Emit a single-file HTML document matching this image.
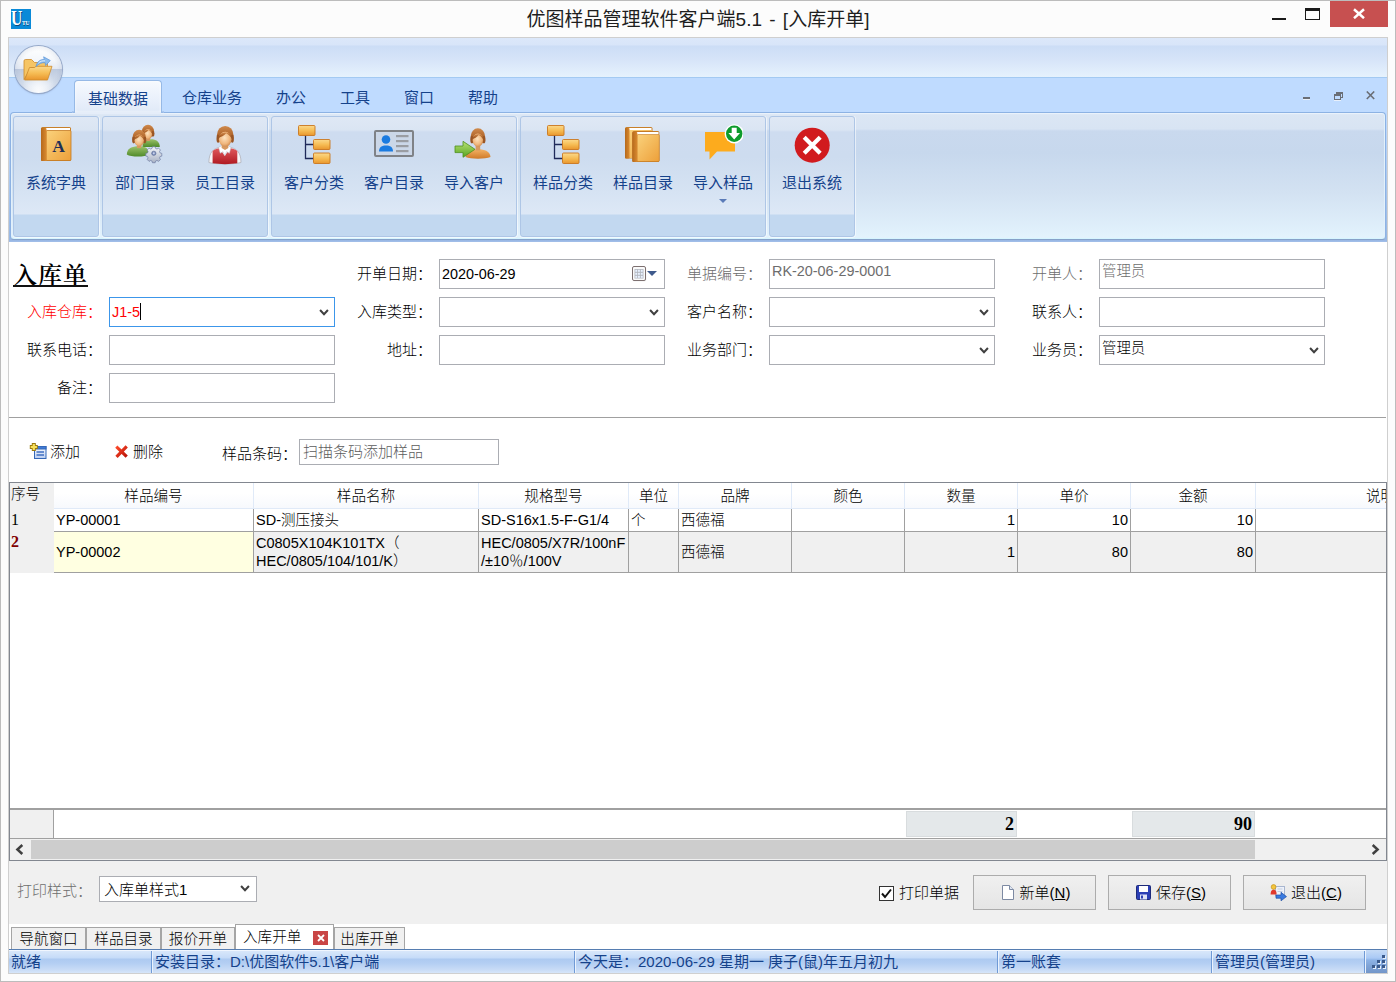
<!DOCTYPE html>
<html lang="zh-CN">
<head>
<meta charset="utf-8">
<title>优图样品管理软件客户端5.1 - [入库开单]</title>
<style>
*{box-sizing:border-box;margin:0;padding:0}
html,body{width:1396px;height:982px;overflow:hidden}
body{position:relative;background:#fcfcfc;font-family:"Liberation Sans","Noto Sans CJK SC",sans-serif;font-size:15px;color:#000}
.abs{position:absolute}
#win{position:absolute;left:0;top:0;width:1396px;height:982px;border:1px solid #bcbcbc;background:#fcfcfc}
#title{position:absolute;left:0;top:6px;width:1396px;text-align:center;font-size:19px;line-height:28px;color:#1e1e1e;word-spacing:2px}
#inner{position:absolute;left:8px;top:37px;width:1380px;height:937px;border:1px solid #cfcfcf;background:#fff}
/* ribbon */
#qat{position:absolute;left:9px;top:38px;width:1378px;height:40px;background:linear-gradient(#dce8fa 0,#d8e5f9 7px,#ccddf6 8px,#d5e3f8 20px,#e6f2fd 39px,#a4caf2 39px,#a4caf2 40px)}
#tabrow{position:absolute;left:9px;top:78px;width:1378px;height:42px;background:#bfdbff}
.rtab{position:absolute;top:80px;height:33px;font-size:15px;line-height:35px;color:#15428b;text-align:center}
.rtab.act{z-index:2;height:33px;background:linear-gradient(#f6f9fe,#e9f0fb 60%,#e2ebf8 90%,#e6eefa);border:1px solid #96b9e6;border-bottom:none;border-radius:4px 4px 0 0;box-shadow:0 0 3px rgba(255,255,255,.9) inset}
#ribbon{position:absolute;left:10px;top:112px;width:1376px;height:128px;border:1px solid #8db2e3;border-radius:4px;background:linear-gradient(#e6eefa 0,#dbe6f4 2px,#d8e4f3 16px,#c9d9ee 18px,#c7d8ed 40px,#d3e2f2 80px,#e3f3fd 126px);border-bottom-color:#86a1c9;box-shadow:inset 0 -1px 0 #d6f5ff,inset 1px 0 0 #e2f0fb,inset -1px 0 0 #e2f0fb,inset 0 1px 0 #eaf2fb}
#ribbonshadow{position:absolute;left:9px;top:240px;width:1378px;height:2px;background:linear-gradient(#96b5e2,#a3c0ea)}
.grp{position:absolute;top:116px;height:121px;border:1px solid #aec6e6;border-radius:3px;background:linear-gradient(#dfe8f5 0,#dae5f3 13px,#cedcf0 15px,#cddcef 40px,#d6e3f3 75px,#dde8f6 97px,#c2d8f0 98px,#c2d8f0 121px);box-shadow:1px 0 0 rgba(255,255,255,.55),0 1px 0 rgba(255,255,255,.55)}
.rbtn{position:absolute;top:120px;width:80px;height:90px;text-align:center;color:#15428b;font-size:15px}
.rbtn svg{position:absolute;left:20px;top:4px;width:40px;height:42px}
.rbtn span{position:absolute;left:0;top:52px;width:80px;line-height:22px;white-space:nowrap}
/* form */
.lbl{position:absolute;width:90px;text-align:right;font-size:15px;font-weight:300;line-height:30px;white-space:nowrap;color:#000}
.lbl.dis{color:#6d6d6d}
.lbl.red{color:#f00}
.inp{font-weight:300;position:absolute;width:226px;height:30px;border:1px solid #abadb3;background:#fff;font-size:14.4px;line-height:28px;padding-left:2px;white-space:nowrap}
.inp.focus{border-color:#3c96ea}
.inp.dis{color:#6d6d6d;line-height:23px}
.chev{position:absolute;right:5px;top:11px;width:10px;height:7px}
/*GRIDCSS*/
.ghd{height:26px;font-weight:300;font-size:14.6px;line-height:27px;text-align:center;background:linear-gradient(#fff 0,#fff 40%,#f7f9fd 100%);border-right:1px solid #e0eaf8;border-bottom:1px solid #e0eaf8;white-space:nowrap}
.gc{font-weight:300;font-size:14.5px;white-space:nowrap;padding-left:2px;border-right:1px solid #a0a0a0;border-bottom:1px solid #a0a0a0;overflow:hidden;background:#fff}
.gc.r2{background:#f0f0f0}
.gc.yel{background:#ffffe1}
.gc.rn{background:#f0f0f0;border:none;font-family:"Liberation Serif","Noto Serif CJK SC",serif;font-size:16px;padding-left:1px}
.gc.r2.rn{font-weight:bold;color:#800000}
.gc.num{text-align:right;padding-right:2px}
.fsum{top:811px;height:26px;background:#e4e8ea;border:1px solid #d8dcde;font:bold 18px/25px "Liberation Serif",serif;text-align:right;padding-right:2px}
/*ENDGRIDCSS*/
/*BOTCSS*/
.pbtn{font-weight:300;top:875px;width:123px;height:35px;border:1px solid #acacac;background:linear-gradient(#f0f0f0,#e5e5e5);text-align:center;font-size:15px;line-height:34px;padding-left:3px;white-space:nowrap}
.mtab{font-weight:300;top:927px;height:23px;background:#f0f0f0;border:1px solid #a5a5a5;border-bottom:none;font-size:14.6px;line-height:22px;text-align:center;white-space:nowrap}
.mtab.act{top:924px;height:26px;background:#fff;line-height:25px;padding-left:7px;text-align:left}
#status{border-top:1px solid #567db1;background:linear-gradient(#f0f6fe 0,#f0f6fe 1px,#d8e7fa 1px,#c5dbf8 8px,#adcaf1 9px,#b3cef3 13px,#c9dcf6 20px,#d6e5f9 23px)}
.stxt{top:951px;font-size:15px;line-height:21px;color:#15428b;white-space:nowrap}
/*ENDBOTCSS*/
</style>
</head>
<body>
<div id="win"></div>
<div id="title">优图样品管理软件客户端5.1 - [入库开单]</div>

<!-- app icon -->
<div class="abs" style="left:11px;top:9px;width:20px;height:20px;background:#0a8ad8;overflow:hidden"><span class="abs" style="left:0;top:-1px;font:bold 20px/20px 'Liberation Serif',serif;color:#fff;text-shadow:1px 1px 0 #0a4a7a;transform:scaleX(.78);transform-origin:0 0">U</span><span class="abs" style="left:11px;top:10px;font:bold 6.5px/7px 'Liberation Serif',serif;color:#fff;text-shadow:.5px .5px 0 #0a4a7a;letter-spacing:-.2px;transform:scaleX(.85);transform-origin:0 0">TU</span></div>
<!-- window controls -->
<div class="abs" style="left:1272px;top:17.5px;width:14px;height:2.5px;background:#1a1a1a"></div>
<div class="abs" style="left:1305px;top:8px;width:15px;height:12px;border:1px solid #1a1a1a;border-top-width:3px"></div>
<div class="abs" style="left:1330px;top:1px;width:58px;height:26px;background:#c75050"></div>
<svg class="abs" style="left:1352px;top:8px" width="14" height="11" viewBox="0 0 14 11"><path d="M2 1.2 L12 10.2 M12 1.2 L2 10.2" stroke="#fff" stroke-width="2.5" fill="none"/></svg>
<div id="inner"></div>
<div id="qat"></div>
<div id="tabrow"></div>
<div class="rtab act" style="left:74px;width:88px">基础数据</div>
<div class="rtab" style="left:168px;width:88px">仓库业务</div>
<div class="rtab" style="left:262px;width:58px">办公</div>
<div class="rtab" style="left:326px;width:58px">工具</div>
<div class="rtab" style="left:390px;width:58px">窗口</div>
<div class="rtab" style="left:454px;width:58px">帮助</div>
<div class="abs" style="left:1303px;top:97px;width:7px;height:2px;background:#6a6e76;box-shadow:0 1px 0 #e8f0fb"></div>
<div class="abs" style="left:1336px;top:92px;width:7px;height:6px;border:1px solid #6a6e76;border-top-width:2px"></div>
<div class="abs" style="left:1334px;top:94px;width:7px;height:6px;border:1px solid #6a6e76;border-top-width:2px;background:#bfdbff;box-shadow:0 1px 0 #e8f0fb"></div>
<svg class="abs" style="left:1366px;top:91px" width="9" height="9" viewBox="0 0 9 9"><path d="M0.8 0.5 L8.2 8 M8.2 0.5 L0.8 8" stroke="#6a6e76" stroke-width="1.6" fill="none"/></svg>
<div class="abs" style="left:9px;top:230px;width:1378px;height:11px;background:#98b8e4"></div><div id="ribbon"></div>
<div class="grp" style="left:13px;width:86px"></div>
<div class="grp" style="left:102px;width:166px"></div>
<div class="grp" style="left:271px;width:246px"></div>
<div class="grp" style="left:520px;width:246px"></div>
<div class="grp" style="left:769px;width:86px"></div>
<div id="ribbonshadow"></div><div class="abs" style="left:9px;top:116px;width:1px;height:124px;background:linear-gradient(#bfdbff,#98b8e4)"></div><div class="abs" style="left:1386px;top:116px;width:1px;height:124px;background:linear-gradient(#bfdbff,#98b8e4)"></div><div class="abs" style="left:75px;top:112px;width:86px;height:2px;background:#e5edf9;z-index:3"></div><div class="abs" style="left:72px;top:111px;width:2px;height:2px;background:#a9c6ee;border-radius:0 0 2px 0;z-index:3"></div><div class="abs" style="left:162px;top:111px;width:2px;height:2px;background:#a9c6ee;border-radius:0 0 0 2px;z-index:3"></div>
<!--BUTTONS-START-->
<svg width="0" height="0" style="position:absolute"><defs>
<linearGradient id="gOr" x1="0" y1="0" x2="0" y2="1"><stop offset="0" stop-color="#fbd98c"/><stop offset=".5" stop-color="#f6bd55"/><stop offset="1" stop-color="#e9962d"/></linearGradient>
<linearGradient id="gOr2" x1="0" y1="0" x2="1" y2="1"><stop offset="0" stop-color="#fad27c"/><stop offset="1" stop-color="#eda03a"/></linearGradient>
<linearGradient id="gSp" x1="0" y1="0" x2="1" y2="0"><stop offset="0" stop-color="#b5691c"/><stop offset="1" stop-color="#d98a30"/></linearGradient>
<radialGradient id="gFace" cx=".45" cy=".4" r=".7"><stop offset="0" stop-color="#fde3c0"/><stop offset=".6" stop-color="#f0b77e"/><stop offset="1" stop-color="#c47a3c"/></radialGradient>
<linearGradient id="gHair" x1="0" y1="0" x2="0" y2="1"><stop offset="0" stop-color="#d08a4c"/><stop offset=".5" stop-color="#b0662c"/><stop offset="1" stop-color="#8a4416"/></linearGradient>
<linearGradient id="gGreen" x1="0" y1="0" x2="0" y2="1"><stop offset="0" stop-color="#9cc26a"/><stop offset="1" stop-color="#4f8a2a"/></linearGradient>
<linearGradient id="gRed" x1="0" y1="0" x2="0" y2="1"><stop offset="0" stop-color="#e0595c"/><stop offset="1" stop-color="#b01a22"/></linearGradient>
<linearGradient id="gBody" x1="0" y1="0" x2="0" y2="1"><stop offset="0" stop-color="#f3b266"/><stop offset="1" stop-color="#d07a28"/></linearGradient>
<linearGradient id="gArr" x1="0" y1="0" x2="0" y2="1"><stop offset="0" stop-color="#b9e276"/><stop offset="1" stop-color="#57a51f"/></linearGradient>
<linearGradient id="gGear" x1="0" y1="0" x2="0" y2="1"><stop offset="0" stop-color="#f4f6fa"/><stop offset="1" stop-color="#a9b2c4"/></linearGradient>
<radialGradient id="gOrb" cx=".5" cy=".25" r=".9"><stop offset="0" stop-color="#ffffff"/><stop offset=".45" stop-color="#eef2f8"/><stop offset=".75" stop-color="#c3cfe2"/><stop offset="1" stop-color="#dfe7f3"/></radialGradient>
</defs></svg>
<div class="rbtn" style="left:16px"><svg viewBox="0 0 40 42"><rect x="5" y="3" width="30" height="34" rx="1.5" fill="#c8802a"/><rect x="7" y="4" width="27" height="3" fill="#fff"/><rect x="10" y="6.5" width="25" height="30" rx="1" fill="url(#gOr2)" stroke="#c47a22" stroke-width=".8"/><rect x="5" y="4" width="5.5" height="33" rx="1" fill="url(#gSp)"/><text x="22.5" y="28" font-family="Liberation Serif,serif" font-weight="bold" font-size="17.5" text-anchor="middle" fill="#1f2f57">A</text></svg><span>系统字典</span></div>
<div class="rbtn" style="left:105px"><svg viewBox="0 0 40 42"><path d="M17.5 23 C17.5 17.5 21 15.2 26 15.2 C31 15.2 34.8 17.5 34.8 23 Z" fill="url(#gGreen)"/><rect x="21.3" y="13.5" width="3.6" height="3.5" fill="#d79a62"/><ellipse cx="23.00" cy="7.39" rx="6.10" ry="6.62" fill="url(#gHair)"/><ellipse cx="18.10" cy="9.80" rx="1.6" ry="2.92" fill="#9a5524"/><ellipse cx="27.90" cy="9.80" rx="1.6" ry="2.92" fill="#9a5524"/><ellipse cx="23.00" cy="10.30" rx="4.10" ry="5.30" fill="url(#gFace)"/><path d="M18.60 9.51 C18.90 4.47 27.10 3.68 27.40 9.77 C25.87 7.39 24.23 6.33 23.61 6.06 C22.18 8.18 20.13 8.45 18.60 9.51Z" fill="url(#gHair)"/><path d="M1.8 30.5 C1.8 24.5 7 22.3 13.8 22.3 C20.5 22.3 24 24.5 24 30.5 C20 33.3 6 33.3 1.8 30.5Z" fill="url(#gGreen)"/><rect x="12" y="20.5" width="4.2" height="3.6" fill="#d79a62"/><ellipse cx="14.20" cy="13.30" rx="6.70" ry="7.50" fill="url(#gHair)"/><ellipse cx="8.70" cy="16.10" rx="1.6" ry="3.30" fill="#9a5524"/><ellipse cx="19.70" cy="16.10" rx="1.6" ry="3.30" fill="#9a5524"/><ellipse cx="14.20" cy="16.60" rx="4.70" ry="6.00" fill="url(#gFace)"/><path d="M9.20 15.70 C9.50 10.00 18.90 9.10 19.20 16.00 C17.49 13.30 15.61 12.10 14.90 11.80 C13.26 14.20 10.91 14.50 9.20 15.70Z" fill="url(#gHair)"/><g transform="translate(28.8 29.3) scale(.8)"><path d="M-1.7 -8.2h3.4l.5 2.1 1.8.75 1.9-1.15 2.4 2.4-1.15 1.9.75 1.8 2.1.5v3.4l-2.1.5-.75 1.8 1.15 1.9-2.4 2.4-1.9-1.15-1.8.75-.5 2.1h-3.4l-.5-2.1-1.8-.75-1.9 1.15-2.4-2.4 1.15-1.9-.75-1.8-2.1-.5v-3.4l2.1-.5.75-1.8-1.15-1.9 2.4-2.4 1.9 1.15 1.8-.75z" fill="url(#gGear)" stroke="#66759e" stroke-width=".8"/><circle r="2.7" fill="#7f90bd" stroke="#56648e" stroke-width=".7"/><circle r="1.2" fill="#c9d2ea"/></g></svg><span>部门目录</span></div>
<div class="rbtn" style="left:185px"><svg viewBox="0 0 40 42"><path d="M3.9 38.5 C3.9 28 9 24.5 14 23.5 L26 23.5 C31 24.5 36 28 36 38.5 C30 40.4 10 40.4 3.9 38.5Z" fill="#f6f6f8" stroke="#a9a9b2" stroke-width=".7"/><path d="M7.6 39.3 L7.6 27 C10 25 12.5 24.2 14.5 24.2 L19.8 32 L25 24.2 C27.5 24.2 30 25 32.3 27 L32.3 39.3 C26 40.4 14 40.4 7.6 39.3Z" fill="url(#gRed)"/><path d="M13.6 23.4 L15.2 29.3 L18 27.6 L19.8 31.6 L21.6 27.6 L24.4 29.3 L26 23.4 L23 21.5 L17 21.5Z" fill="#fff" stroke="#b9b9c4" stroke-width=".5"/><path d="M16.8 20 L23.2 20 L23.4 24 L20 26 L16.6 24Z" fill="#d79a62"/><ellipse cx="20.20" cy="11.13" rx="8.30" ry="9.25" fill="url(#gHair)"/><ellipse cx="13.10" cy="14.70" rx="1.6" ry="4.07" fill="#9a5524"/><ellipse cx="27.30" cy="14.70" rx="1.6" ry="4.07" fill="#9a5524"/><ellipse cx="20.20" cy="15.20" rx="6.30" ry="7.40" fill="url(#gFace)"/><path d="M13.60 14.09 C13.90 7.06 26.50 5.95 26.80 14.46 C24.61 11.13 22.09 9.65 21.14 9.28 C18.94 12.24 15.79 12.61 13.60 14.09Z" fill="url(#gHair)"/></svg><span>员工目录</span></div>
<div class="rbtn" style="left:274px"><svg viewBox="0 0 40 42"><path d="M11.5 11 V34.5 H20 M11.5 20.5 H20" fill="none" stroke="#1f2a5a" stroke-width="1.3"/><g stroke="#c9761e" stroke-width=".9" fill="url(#gOr)"><rect x="4.5" y="1.5" width="16.5" height="10" rx="1"/><rect x="19.5" y="15.5" width="16.5" height="10" rx="1"/><rect x="19.5" y="29" width="16.5" height="10.5" rx="1"/></g></svg><span>客户分类</span></div>
<div class="rbtn" style="left:354px"><svg viewBox="0 0 40 42"><rect x="1" y="7" width="38" height="25" rx="1" fill="#cbd7e8" stroke="#7f8287" stroke-width="2"/><circle cx="12" cy="15.5" r="4.3" fill="#1b7be0"/><path d="M5 27.5 C5 23 8 21.5 12 21.5 C16 21.5 19 23 19 27.5Z" fill="#1b7be0"/><g fill="#9a9da3"><rect x="22" y="11" width="12.5" height="2.2"/><rect x="22" y="16" width="12.5" height="2.2"/><rect x="22" y="21" width="12.5" height="2.2"/><rect x="22" y="26" width="12.5" height="2.2"/></g></svg><span>客户目录</span></div>
<div class="rbtn" style="left:434px"><svg viewBox="0 0 40 42"><path d="M11.5 33 C11.8 27.5 17 25.2 24 25.2 C31 25.2 36.2 27.5 36.5 33 C31 35.3 17 35.3 11.5 33Z" fill="url(#gBody)"/><rect x="21.6" y="21.5" width="4.6" height="5" fill="#d79a62"/><ellipse cx="23.90" cy="12.57" rx="7.20" ry="8.25" fill="url(#gHair)"/><ellipse cx="17.90" cy="15.70" rx="1.6" ry="3.63" fill="#9a5524"/><ellipse cx="29.90" cy="15.70" rx="1.6" ry="3.63" fill="#9a5524"/><ellipse cx="23.90" cy="16.20" rx="5.20" ry="6.60" fill="url(#gFace)"/><path d="M18.40 15.21 C18.70 8.94 29.10 7.95 29.40 15.54 C27.54 12.57 25.46 11.25 24.68 10.92 C22.86 13.56 20.26 13.89 18.40 15.21Z" fill="url(#gHair)"/><path d="M1 22 H9 V17.3 L21 25.3 L9 33.3 V28.6 H1Z" fill="url(#gArr)" stroke="#4c8f1c" stroke-width=".8"/></svg><span>导入客户</span></div>
<div class="rbtn" style="left:523px"><svg viewBox="0 0 40 42"><path d="M11.5 11 V34.5 H20 M11.5 20.5 H20" fill="none" stroke="#1f2a5a" stroke-width="1.3"/><g stroke="#c9761e" stroke-width=".9" fill="url(#gOr)"><rect x="4.5" y="1.5" width="16.5" height="10" rx="1"/><rect x="19.5" y="15.5" width="16.5" height="10" rx="1"/><rect x="19.5" y="29" width="16.5" height="10.5" rx="1"/></g></svg><span>样品分类</span></div>
<div class="rbtn" style="left:603px"><svg viewBox="0 0 40 42"><rect x="2" y="3" width="27.5" height="31.5" rx="1.5" fill="#c8802a"/><rect x="4" y="4" width="24.5" height="3" fill="#fff"/><rect x="6" y="6" width="23.5" height="28" rx="1" fill="url(#gOr2)"/><rect x="2" y="4" width="4.5" height="30.5" rx="1" fill="url(#gSp)"/><rect x="9.3" y="7" width="27" height="31" rx="1.5" fill="#c47a26"/><rect x="11.5" y="8" width="24" height="3" fill="#fff"/><rect x="14" y="10.5" width="22.3" height="27" rx="1" fill="url(#gOr2)" stroke="#c47a22" stroke-width=".6"/><rect x="9.3" y="8" width="5" height="30" rx="1" fill="url(#gSp)"/></svg><span>样品目录</span></div>
<div class="rbtn" style="left:683px"><svg viewBox="0 0 40 42"><path d="M2 8 H32 V27.5 H14 L6.5 35.5 V27.5 H2Z" fill="#fdab1d"/><circle cx="31.2" cy="9.8" r="9.6" fill="#fff"/><circle cx="31.2" cy="9.8" r="8.2" fill="#0d9b2c"/><path d="M28.7 3.8 H33.7 V9 H37 L31.2 15.6 L25.4 9 H28.7Z" fill="#fff"/></svg><span>导入样品</span></div>
<div class="rbtn" style="left:772px"><svg viewBox="0 0 40 42"><circle cx="20.2" cy="21.2" r="17.5" fill="#d11b1e"/><path d="M12.2 13.2 L28.2 29.2 M28.2 13.2 L12.2 29.2" stroke="#fff" stroke-width="4.2" fill="none"/></svg><span>退出系统</span></div>
<div class="abs" style="left:719px;top:199px;width:0;height:0;border-left:4px solid transparent;border-right:4px solid transparent;border-top:4px solid #5a7bb8"></div>
<div class="abs" style="left:15px;top:46px;width:47px;height:47px;border-radius:50%;background:radial-gradient(ellipse at 50% 100%,rgba(255,255,255,.85) 0,rgba(255,255,255,0) 50%),radial-gradient(circle at 50% 50%,rgba(255,255,255,0) 55%,rgba(120,140,175,.35) 100%),linear-gradient(#ffffff 0,#f4f7fb 30%,#e3e9f3 49%,#bfcbdf 50%,#cdd8e8 70%,#eef3fa 100%);box-shadow:0 0 0 1px #97a9c8,0 1px 2px rgba(60,80,120,.4)"></div>
<svg class="abs" style="left:22px;top:54px" width="34" height="30" viewBox="0 0 34 30"><path d="M2 25.5 V7 Q2 5.5 3.5 5.5 H9.5 L12.5 8.5 H24 Q25.5 8.5 25.5 10 V13.5 H9 L2 25.5Z" fill="#f6c565" stroke="#cd8a2c" stroke-width=".8"/><path d="M2.6 26 L7.5 13.5 H12.5 L14 12.3 H30 L25.5 26Z" fill="url(#gOr)" stroke="#cd8a2c" stroke-width=".8"/><path d="M14 12.5 C15 7.5 18.5 5.2 22.3 5.6 L21.6 2.8 L28.3 6.5 L23.6 11.6 L23.2 8.8 C20 8.3 17 9.5 14 12.5Z" fill="#8dbdee" stroke="#5b95d8" stroke-width=".7"/><path d="M16.5 9.2 C18 7.2 20.5 6.6 23 6.9" stroke="#e4f1fd" stroke-width=".9" fill="none"/></svg>
<!--BUTTONS-END-->
<!--FORM-START-->
<div class="abs" style="left:9px;top:242px;width:1378px;height:176px;background:#fff"></div>
<div class="abs" style="left:13px;top:260px;font:600 24px/30px 'Liberation Serif','Noto Serif CJK SC',serif;letter-spacing:1px;color:#000;height:27px;line-height:30px;top:261px">入库单</div><div class="abs" style="left:13px;top:285px;width:75px;height:2px;background:#111"></div>
<div class="lbl " style="left:312px;top:259px;width:120px">开单日期：</div>
<div class="lbl dis" style="left:642px;top:259px;width:120px">单据编号：</div>
<div class="lbl dis" style="left:972px;top:259px;width:120px">开单人：</div>
<div class="lbl red" style="left:-18px;top:297px;width:120px">入库仓库：</div>
<div class="lbl " style="left:312px;top:297px;width:120px">入库类型：</div>
<div class="lbl " style="left:642px;top:297px;width:120px">客户名称：</div>
<div class="lbl " style="left:972px;top:297px;width:120px">联系人：</div>
<div class="lbl " style="left:-18px;top:335px;width:120px">联系电话：</div>
<div class="lbl " style="left:312px;top:335px;width:120px">地址：</div>
<div class="lbl " style="left:642px;top:335px;width:120px">业务部门：</div>
<div class="lbl " style="left:972px;top:335px;width:120px">业务员：</div>
<div class="lbl " style="left:-18px;top:373px;width:120px">备注：</div>
<div class="inp " style="left:439px;top:259px">2020-06-29<svg class="abs" style="right:17px;top:6px" width="15" height="16" viewBox="0 0 15 16"><rect x="1.2" y="1.2" width="13" height="14" rx="1.5" fill="#c9c9c9" opacity=".5"/><rect x=".5" y=".5" width="13" height="14" rx="1.5" fill="#fafafa" stroke="#7d7070"/><rect x="2.5" y="3" width="9" height="9.5" fill="#b4b8bf"/><g fill="#e8f1ff"><rect x="3.3" y="3.8" width="1.9" height="2"/><rect x="6" y="3.8" width="1.9" height="2"/><rect x="8.8" y="3.8" width="1.9" height="2"/><rect x="3.3" y="6.8" width="1.9" height="2"/><rect x="6" y="6.8" width="1.9" height="2"/><rect x="8.8" y="6.8" width="1.9" height="2"/><rect x="3.3" y="9.8" width="1.9" height="2"/><rect x="6" y="9.8" width="1.9" height="2"/><rect x="8.8" y="9.8" width="1.9" height="2"/></g></svg><div class="abs" style="right:7px;top:11px;border-left:5px solid transparent;border-right:5px solid transparent;border-top:5.5px solid #3f5a8c"></div></div>
<div class="inp dis" style="left:769px;top:259px">RK-20-06-29-0001</div>
<div class="inp dis" style="left:1099px;top:259px">管理员</div>
<div class="inp focus" style="left:109px;top:297px"><span style="color:#f00">J1-5</span><span style="display:inline-block;width:1px;height:17px;background:#000;vertical-align:-3px"></span><svg class="chev" viewBox="0 0 11 8"><path d="M1 1.2 L5.5 6 L10 1.2" fill="none" stroke="#404040" stroke-width="2.3"/></svg></div>
<div class="inp " style="left:439px;top:297px"><svg class="chev" viewBox="0 0 11 8"><path d="M1 1.2 L5.5 6 L10 1.2" fill="none" stroke="#404040" stroke-width="2.3"/></svg></div>
<div class="inp " style="left:769px;top:297px"><svg class="chev" viewBox="0 0 11 8"><path d="M1 1.2 L5.5 6 L10 1.2" fill="none" stroke="#404040" stroke-width="2.3"/></svg></div>
<div class="inp " style="left:1099px;top:297px"></div>
<div class="inp " style="left:109px;top:335px"></div>
<div class="inp " style="left:439px;top:335px"></div>
<div class="inp " style="left:769px;top:335px"><svg class="chev" viewBox="0 0 11 8"><path d="M1 1.2 L5.5 6 L10 1.2" fill="none" stroke="#404040" stroke-width="2.3"/></svg></div>
<div class="inp " style="left:1099px;top:335px;line-height:25px">管理员<svg class="chev" viewBox="0 0 11 8"><path d="M1 1.2 L5.5 6 L10 1.2" fill="none" stroke="#404040" stroke-width="2.3"/></svg></div>
<div class="inp " style="left:109px;top:373px"></div>
<div class="abs" style="left:9px;top:417px;width:1377px;height:1px;background:#a0a0a0"></div>
<svg class="abs" style="left:29px;top:442px" width="18" height="18" viewBox="0 0 18 18"><defs><linearGradient id="gDoc" x1="0" y1="0" x2="0" y2="1"><stop offset="0" stop-color="#ffffff"/><stop offset="1" stop-color="#b9cdf0"/></linearGradient></defs><rect x="5.5" y="4.5" width="11.5" height="12" fill="url(#gDoc)" stroke="#3568b8"/><rect x="5.5" y="4.5" width="11.5" height="2.5" fill="#3f7ad6" stroke="#3568b8"/><path d="M7.5 10H15M7.5 13H15" stroke="#3f6fc2" stroke-width="1.3"/><path d="M4.8 1V9M.8 5H8.8" stroke="#9a7a10" stroke-width="4"/><path d="M4.8 1.9V8.1M1.7 5H7.9" stroke="#f8e05a" stroke-width="2.2"/></svg>
<div class="abs" style="left:50px;top:441px;font-size:15px;font-weight:300;line-height:22px">添加</div>
<svg class="abs" style="left:114px;top:444px" width="15" height="15" viewBox="0 0 15 15"><defs><linearGradient id="gX" x1="0" y1="0" x2="1" y2="1"><stop offset="0" stop-color="#ff4a2a"/><stop offset="1" stop-color="#b81408"/></linearGradient></defs><path d="M2.3 2.6L12.7 12.6M12.7 2.4L2.5 12.8" stroke="url(#gX)" stroke-width="3.2" fill="none"/></svg>
<div class="abs" style="left:133px;top:441px;font-size:15px;font-weight:300;line-height:22px">删除</div>
<div class="abs" style="left:222px;top:443px;font-size:15px;font-weight:300;line-height:22px">样品条码：</div>
<div class="abs" style="left:299px;top:439px;width:200px;height:26px;border:1px solid #abadb3;background:#fff;font-size:15px;font-weight:300;line-height:23px;padding-left:3px;color:#5c5c5c">扫描条码添加样品</div>
<!--FORM-END-->
<!--GRID-START-->
<div class="abs" style="left:9px;top:482px;width:1378px;height:379px;border:1px solid #828790;background:#fff"></div><div class="abs" style="left:10px;top:808px;width:1376px;height:2px;background:#a0a0a0"></div>
<div class="abs" style="left:10px;top:483px;width:44px;height:90px;background:#f0f0f0"></div>
<div class="abs ghd" style="left:10px;top:483px;width:44px;text-align:left;background:none;border:none;line-height:22px;padding-left:1px">序号</div>
<div class="abs ghd" style="left:54px;top:483px;width:200px">样品编号</div>
<div class="abs ghd" style="left:254px;top:483px;width:225px">样品名称</div>
<div class="abs ghd" style="left:479px;top:483px;width:150px">规格型号</div>
<div class="abs ghd" style="left:629px;top:483px;width:50px">单位</div>
<div class="abs ghd" style="left:679px;top:483px;width:113px">品牌</div>
<div class="abs ghd" style="left:792px;top:483px;width:113px">颜色</div>
<div class="abs ghd" style="left:905px;top:483px;width:113px">数量</div>
<div class="abs ghd" style="left:1018px;top:483px;width:113px">单价</div>
<div class="abs ghd" style="left:1131px;top:483px;width:125px">金额</div>
<div class="abs ghd" style="left:1256px;top:483px;width:130px;overflow:hidden;text-align:left;padding-left:110px;border-right:none">说明明</div>
<div class="abs gc r1 rn" style="left:10px;top:509px;width:44px;height:23px;line-height:22px">1</div>
<div class="abs gc r1" style="left:54px;top:509px;width:200px;height:23px;line-height:22px">YP-00001</div>
<div class="abs gc r1" style="left:254px;top:509px;width:225px;height:23px;line-height:22px">SD-测压接头</div>
<div class="abs gc r1" style="left:479px;top:509px;width:150px;height:23px;line-height:22px">SD-S16x1.5-F-G1/4</div>
<div class="abs gc r1" style="left:629px;top:509px;width:50px;height:23px;line-height:22px">个</div>
<div class="abs gc r1" style="left:679px;top:509px;width:113px;height:23px;line-height:22px">西德福</div>
<div class="abs gc r1" style="left:792px;top:509px;width:113px;height:23px;line-height:22px"></div>
<div class="abs gc r1 num" style="left:905px;top:509px;width:113px;height:23px;line-height:22px">1</div>
<div class="abs gc r1 num" style="left:1018px;top:509px;width:113px;height:23px;line-height:22px">10</div>
<div class="abs gc r1 num" style="left:1131px;top:509px;width:125px;height:23px;line-height:22px">10</div>
<div class="abs gc r1" style="left:1256px;top:509px;width:130px;border-right:none;height:23px;line-height:22px"></div>
<div class="abs gc r2 rn" style="left:10px;top:532px;width:44px;height:41px;line-height:20px">2</div>
<div class="abs gc r2 yel" style="left:54px;top:532px;width:200px;height:41px;line-height:40px">YP-00002</div>
<div class="abs gc r2" style="left:254px;top:532px;width:225px;height:41px;line-height:18px;padding-top:2px">C0805X104K101TX（<br>HEC/0805/104/101/K）</div>
<div class="abs gc r2" style="left:479px;top:532px;width:150px;height:41px;line-height:18px;padding-top:2px">HEC/0805/X7R/100nF<br>/±10％/100V</div>
<div class="abs gc r2" style="left:629px;top:532px;width:50px;height:41px;line-height:40px"></div>
<div class="abs gc r2" style="left:679px;top:532px;width:113px;height:41px;line-height:40px">西德福</div>
<div class="abs gc r2" style="left:792px;top:532px;width:113px;height:41px;line-height:40px"></div>
<div class="abs gc r2 num" style="left:905px;top:532px;width:113px;height:41px;line-height:40px">1</div>
<div class="abs gc r2 num" style="left:1018px;top:532px;width:113px;height:41px;line-height:40px">80</div>
<div class="abs gc r2 num" style="left:1131px;top:532px;width:125px;height:41px;line-height:40px">80</div>
<div class="abs gc r2" style="left:1256px;top:532px;width:130px;border-right:none;height:41px;line-height:40px"></div>
<div class="abs" style="left:10px;top:810px;width:1376px;height:28px;background:#fff"></div>
<div class="abs" style="left:10px;top:810px;width:44px;height:28px;background:#f0f0f0;border-right:1px solid #a0a0a0"></div>
<div class="abs fsum" style="left:906px;width:111px">2</div>
<div class="abs fsum" style="left:1132px;width:123px">90</div>
<div class="abs" style="left:10px;top:838px;width:1376px;height:22px;background:#f0f0f0;border-top:1px solid #a0a0a0"></div>
<div class="abs" style="left:31px;top:840px;width:1224px;height:19px;background:#cdcdcd"></div>
<svg class="abs" style="left:15px;top:844px" width="9" height="11" viewBox="0 0 9 11"><path d="M7.3 1L2.4 5.5L7.3 10" fill="none" stroke="#404040" stroke-width="2.5"/></svg>
<svg class="abs" style="left:1371px;top:844px" width="9" height="11" viewBox="0 0 9 11"><path d="M1.7 1L6.6 5.5L1.7 10" fill="none" stroke="#404040" stroke-width="2.5"/></svg>
<!--GRID-END-->
<!--BOTTOM-START-->
<div class="abs" style="left:9px;top:861px;width:1378px;height:63px;background:#f0f0f0"></div>
<div class="abs" style="left:17px;top:880px;font-size:15px;font-weight:300;line-height:22px;color:#6d6d6d">打印样式：</div>
<div class="abs" style="left:99px;top:876px;width:158px;height:26px;border:1px solid #abadb3;background:#fff;font-size:15px;font-weight:300;line-height:25px;padding-left:4px">入库单样式1<svg class="chev" viewBox="0 0 11 8" style="top:8px;right:6px"><path d="M1 1.2 L5.5 6 L10 1.2" fill="none" stroke="#404040" stroke-width="2.3"/></svg></div>
<div class="abs" style="left:879px;top:886px;width:15px;height:15px;border:1px solid #333;background:#fff"></div>
<svg class="abs" style="left:881px;top:888px" width="11" height="11" viewBox="0 0 11 11"><path d="M1 5.5L4 9L10 1.5" fill="none" stroke="#111" stroke-width="2"/></svg>
<div class="abs" style="left:899px;top:882px;font-size:15px;font-weight:300;line-height:22px">打印单据</div>
<div class="abs pbtn" style="left:973px"><svg width="12" height="15" viewBox="0 0 12 15" style="vertical-align:-2px;margin-right:6px"><path d="M.5 .5H7.5L11.5 4.5V14.5H.5Z" fill="#fff" stroke="#7d8aa3"/><path d="M7.5 .5V4.5H11.5" fill="#dfe6f2" stroke="#7d8aa3"/></svg><span>新单(<u>N</u>)</span></div>
<div class="abs pbtn" style="left:1108px"><svg width="15" height="15" viewBox="0 0 15 15" style="vertical-align:-2px;margin-right:5px"><rect x=".5" y=".5" width="14" height="14" rx="1" fill="#2b3fb5" stroke="#1d2a7a"/><rect x="3" y="1" width="9" height="6" fill="#fff"/><rect x="4" y="9.5" width="7" height="5" fill="#dfe3f5"/><rect x="5" y="10.5" width="2" height="3" fill="#2b3fb5"/></svg><span>保存(<u>S</u>)</span></div>
<div class="abs pbtn" style="left:1243px"><svg width="17" height="17" viewBox="0 0 17 17" style="vertical-align:-3px;margin-right:4px"><rect x="5.5" y="2.5" width="9" height="9.5" fill="#eef2fa" stroke="#a8b6d0"/><path d="M7.5 5H12.5M7.5 7.5H12.5" stroke="#c3cde0"/><circle cx="3.6" cy="3" r="2.4" fill="#f4c63e" stroke="#c49418" stroke-width=".7"/><path d="M0.6 10.5C.6 6.8 2 5.8 3.6 5.8S6.6 6.8 6.6 10.5Z" fill="#e23a2c"/><path d="M6 11H11V8.3L16.5 12.6L11 16.8V14.2H6Z" fill="#3b7be0" stroke="#1f4fa0" stroke-width=".7"/></svg><span>退出(<u>C</u>)</span></div>
<div class="abs" style="left:9px;top:924px;width:1378px;height:26px;background:#fff"></div>
<div class="abs mtab" style="left:11px;width:75px">导航窗口</div>
<div class="abs mtab" style="left:86px;width:75px">样品目录</div>
<div class="abs mtab" style="left:161px;width:74px">报价开单</div>
<div class="abs mtab act" style="left:235px;width:99px">入库开单<div class="abs" style="left:77px;top:6px;width:15px;height:14px;background:#c94545"></div><svg class="abs" style="left:80.5px;top:9px" width="8" height="8" viewBox="0 0 8 8"><path d="M1 1L7 7M7 1L1 7" stroke="#fff" stroke-width="1.8"/></svg></div>
<div class="abs mtab" style="left:334px;width:71px">出库开单</div>
<div class="abs" id="status" style="left:9px;top:949px;width:1378px;height:24px"></div>
<div class="abs stxt" style="left:11px">就绪</div>
<div class="abs" style="left:151px;top:951px;width:2px;height:22px;border-left:1px solid #6f9ad6;border-right:1px solid #eaf2fd"></div>
<div class="abs stxt" style="left:155px">安装目录：D:\优图软件5.1\客户端</div>
<div class="abs" style="left:574px;top:951px;width:2px;height:22px;border-left:1px solid #6f9ad6;border-right:1px solid #eaf2fd"></div>
<div class="abs stxt" style="left:578px">今天是：2020-06-29 星期一 庚子(鼠)年五月初九</div>
<div class="abs" style="left:997px;top:951px;width:2px;height:22px;border-left:1px solid #6f9ad6;border-right:1px solid #eaf2fd"></div>
<div class="abs stxt" style="left:1001px">第一账套</div>
<div class="abs" style="left:1211px;top:951px;width:2px;height:22px;border-left:1px solid #6f9ad6;border-right:1px solid #eaf2fd"></div>
<div class="abs stxt" style="left:1215px">管理员(管理员)</div>
<div class="abs" style="left:1364px;top:951px;width:2px;height:22px;border-left:1px solid #6f9ad6;border-right:1px solid #eaf2fd"></div>
<div class="abs" style="left:1366px;top:950px;width:21px;height:23px;background:linear-gradient(#c6dbf6 0,#a9c9f5 8px,#8db3e6 10px,#7fa3d6 16px,#7396c9 23px)"></div><div class="abs" style="left:1383px;top:956px;width:3px;height:3px;background:#e6effb"></div><div class="abs" style="left:1382px;top:955px;width:3px;height:3px;background:#3a5a8c"></div><div class="abs" style="left:1378px;top:961px;width:3px;height:3px;background:#e6effb"></div><div class="abs" style="left:1377px;top:960px;width:3px;height:3px;background:#3a5a8c"></div><div class="abs" style="left:1383px;top:961px;width:3px;height:3px;background:#e6effb"></div><div class="abs" style="left:1382px;top:960px;width:3px;height:3px;background:#3a5a8c"></div><div class="abs" style="left:1373px;top:966px;width:3px;height:3px;background:#e6effb"></div><div class="abs" style="left:1372px;top:965px;width:3px;height:3px;background:#3a5a8c"></div><div class="abs" style="left:1378px;top:966px;width:3px;height:3px;background:#e6effb"></div><div class="abs" style="left:1377px;top:965px;width:3px;height:3px;background:#3a5a8c"></div><div class="abs" style="left:1383px;top:966px;width:3px;height:3px;background:#e6effb"></div><div class="abs" style="left:1382px;top:965px;width:3px;height:3px;background:#3a5a8c"></div>
<!--BOTTOM-END-->
</body>
</html>
